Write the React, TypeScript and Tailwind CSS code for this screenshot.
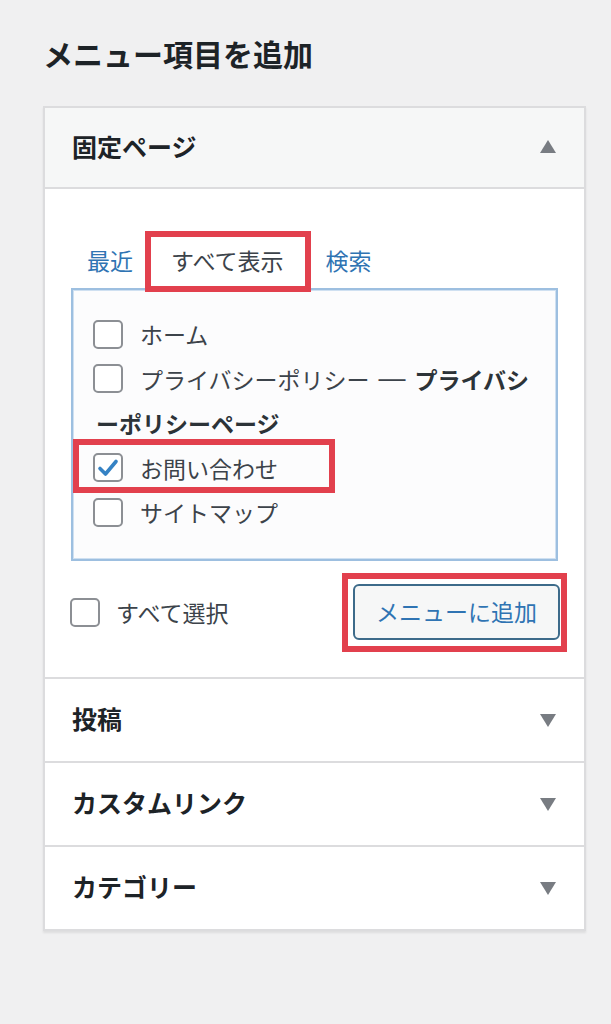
import React from "react";

const font = { fontFamily: '"Noto Sans CJK JP", "Noto Sans", sans-serif' };

function Box({ checked = false }: { checked?: boolean }) {
  return (
    <span className="inline-flex w-[30px] h-[29px] shrink-0 items-center justify-center rounded-[5px] border-2 border-[#8c8f94] bg-white">
      {checked && (
        <svg width="22" height="20" viewBox="0 0 22 20">
          <path d="M3 10.5 L8.5 16 L19 3.5" fill="none" stroke="#3582c4" strokeWidth="3.6" strokeLinecap="round" strokeLinejoin="round" />
        </svg>
      )}
    </span>
  );
}

function Tri({ up = false }: { up?: boolean }) {
  return (
    <svg width="16" height="13" viewBox="0 0 16 13">
      {up ? <polygon points="8,0 16,13 0,13" fill="#787c82" /> : <polygon points="0,0 16,0 8,13" fill="#787c82" />}
    </svg>
  );
}

function Section({ title }: { title: string }) {
  return (
    <div className="flex h-[84px] items-center justify-between border-t-2 border-[#dcdcde] pb-[4px] pl-[27px] pr-[28px]">
      <span className="text-[25px] font-bold leading-[40px] text-[#1d2327]">{title}</span>
      <span className="pt-[4px]"><Tri /></span>
    </div>
  );
}

export default function App() {
  return (
    <div className="min-h-[1024px] w-[611px] bg-[#f0f0f1]" style={font}>
      <div className="pl-[43px] pt-[33px]">
        <h2 className="text-[30px] font-bold leading-[40px] text-[#1d2327]">メニュー項目を追加</h2>
      </div>
      <div className="ml-[43px] mt-[33px] w-[543px] border-2 border-[#dcdcde] bg-white shadow-[0_2px_2px_rgba(0,0,0,0.08)]">
        <div className="flex h-[81px] items-center justify-between border-b-2 border-[#dcdcde] bg-[#f6f7f7] pb-[4px] pl-[27px] pr-[28px]">
          <span className="text-[25px] font-bold leading-[40px] text-[#1d2327]">固定ページ</span>
          <span className="pt-[2px]"><Tri up /></span>
        </div>
        <div className="pl-[26px] pr-[26px] pt-[42px] pb-[25px]">
          <div className="flex h-[57px] items-start pl-[16px] text-[23px]">
            <span className="leading-[58px] text-[#2f74b3]">最近</span>
            <span className="relative z-10 ml-[12px] h-[61px] border-[6px] border-[#e2404d] bg-white pl-[20px] pr-[22px] leading-[46px] text-[#3c434a]">すべて表示</span>
            <span className="ml-[14px] leading-[58px] text-[#2f74b3]">検索</span>
          </div>
          <div className="h-[273px] w-[487px] border-2 border-[#9dbfe0] bg-[#fcfcfd] pl-[20px] pt-[22px] text-[23px] text-[#3c434a] shadow-[inset_0_0_0_1px_#cfe0f1]">
            <div className="flex h-[44.5px] items-center gap-[17px]"><Box /><span>ホーム</span></div>
            <div className="flex h-[44.5px] items-center gap-[17px]">
              <Box />
              <span className="flex items-center whitespace-nowrap">
                プライバシーポリシー
                <span className="mx-[9px] text-[27px] leading-none" style={{ fontFamily: '"Liberation Sans", sans-serif' }}>—</span>
                <b className="text-[#2c3338]">プライバシ</b>
              </span>
            </div>
            <div className="flex h-[44.5px] items-center pl-[3px]"><b className="text-[#2c3338]">ーポリシーページ</b></div>
            <div className="relative flex h-[44.5px] items-center gap-[17px]">
              <Box checked /><span>お問い合わせ</span>
              <span className="absolute left-[-20px] top-[-7px] h-[54px] w-[262px] border-[6px] border-[#e2404d]" />
            </div>
            <div className="flex h-[44.5px] items-center gap-[17px]"><Box /><span>サイトマップ</span></div>
          </div>
          <div className="mt-[12px] flex items-center justify-between">
            <div className="-ml-[1px] flex items-center gap-[16px] text-[23px] text-[#3c434a]"><Box /><span>すべて選択</span></div>
            <div className="-mr-[9px] border-[6px] border-[#e2404d] pl-[5px] pr-[1px] pt-[5px] pb-[6px]">
              <button className="flex h-[56px] w-[207px] items-center justify-center rounded-[6px] border-2 border-[#3d6b8a] bg-[#f6f7f7] pb-[2px] text-[23px] text-[#2f74b3]">メニューに追加</button>
            </div>
          </div>
        </div>
        <Section title="投稿" />
        <Section title="カスタムリンク" />
        <Section title="カテゴリー" />
      </div>
    </div>
  );
}
